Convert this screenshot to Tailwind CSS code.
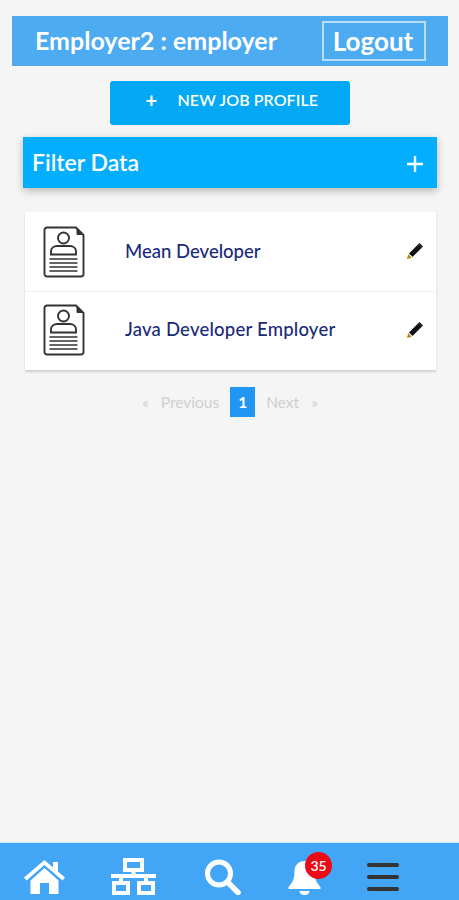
<!DOCTYPE html>
<html lang="en">
<head>
    <meta charset="UTF-8">
    <meta name="viewport" content="width=device-width, initial-scale=1.0">
    <title>Job Profiles</title>
    <script src="https://cdn.jsdelivr.net/npm/@tailwindcss/browser@4"></script>
</head>
<body class="bg-[#f5f5f5] font-['Lato','Noto_Sans',sans-serif]">
    <div class="relative h-[900px] w-[459px] overflow-hidden flex flex-col pt-4">
        <!-- header -->
        <div class="ml-3 mr-[11px] h-[50px] bg-[#4cabf1] flex items-center justify-between pl-[23px] pr-[22px] text-white">
            <span class="text-[25px] font-bold">Employer2 : employer</span>
            <span class="w-[104px] h-[40px] border-2 border-white/60 flex items-center justify-center text-[26px] font-bold pr-[2px]">Logout</span>
        </div>

        <!-- new job profile -->
        <div class="mt-[15px] mx-auto w-[240px] h-[44px] bg-[#03a9f4] rounded-[3px] flex items-start pt-[9px] pl-[36px] text-white">
            <span class="w-[32px] text-[20px] leading-[20px] font-bold">+</span>
            <span class="text-[16px] leading-[20px] font-semibold tracking-[0.07px]">NEW JOB PROFILE</span>
        </div>

        <!-- filter bar -->
        <div class="mt-3 ml-[23px] mr-[22px] h-[51px] bg-[#03aeff] shadow-[0_3px_8px_rgba(0,0,0,0.25)] flex items-center justify-between pl-[9px] pr-[13px] text-white">
            <span class="text-[23px] font-semibold">Filter Data</span>
            <svg width="18" height="18" viewBox="0 0 18 18" class="mt-[2px]"><path d="M9 1v16M1 9h16" stroke="#fff" stroke-width="2.4"/></svg>
        </div>

        <!-- list -->
        <div class="mt-6 ml-[25px] mr-[23px] bg-white shadow-[0_2px_2px_rgba(0,0,0,0.16)]">
            <div class="h-[80px] flex items-center border-b border-[#f0f0f0] pl-[18px] pr-[12px]">
                <svg width="42" height="52" viewBox="0 0 42 52" fill="none" stroke="#333" stroke-width="1.9">
                    <path d="M4 1.500h29l7.500 7.500v39a2.500 2.500 0 0 1-2.500 2.500h-34a2.500 2.500 0 0 1-2.500-2.500v-44a2.500 2.500 0 0 1 2.500-2.500z"/>
                    <path d="M34 2l6 6.500h-6z" fill="#333" stroke-width="1"/>
                    <circle cx="20.500" cy="12" r="5.500"/>
                    <path d="M8 28.500v-3c0-3.500 3-5.500 6-5.500h13c3 0 6 2 6 5.500v3z"/>
                    <path d="M6.500 33h28M6.500 37h28M6.500 41h28M6.500 45h28" stroke-width="1.700"/>
                </svg>
                <span class="ml-[40px] text-[18.5px] font-medium text-[#1a2a7a]">Mean Developer</span>
                <svg width="18" height="18" viewBox="0 0 18 18" class="ml-auto mb-[2px]"><path d="M1 17l1.200-4.800 3.600 3.600z" fill="#b8860b"/><path d="M3 11.500L12.500 2l3.500 3.500L6.500 15z" fill="#111"/><path d="M13.500 1l3.500 3.500-1 1L12.500 2z" fill="#111"/></svg>
            </div>
            <div class="h-[78px] flex items-center pb-[2px] pl-[18px] pr-[12px]">
                <svg width="42" height="52" viewBox="0 0 42 52" fill="none" stroke="#333" stroke-width="1.9">
                    <path d="M4 1.500h29l7.500 7.500v39a2.500 2.500 0 0 1-2.500 2.500h-34a2.500 2.500 0 0 1-2.500-2.500v-44a2.500 2.500 0 0 1 2.500-2.500z"/>
                    <path d="M34 2l6 6.500h-6z" fill="#333" stroke-width="1"/>
                    <circle cx="20.500" cy="12" r="5.500"/>
                    <path d="M8 28.500v-3c0-3.500 3-5.500 6-5.500h13c3 0 6 2 6 5.500v3z"/>
                    <path d="M6.500 33h28M6.500 37h28M6.500 41h28M6.500 45h28" stroke-width="1.700"/>
                </svg>
                <span class="ml-[40px] text-[18.5px] font-medium text-[#1a2a7a] tracking-[0.22px]">Java Developer Employer</span>
                <svg width="18" height="18" viewBox="0 0 18 18" class="ml-auto"><path d="M1 17l1.200-4.800 3.600 3.600z" fill="#b8860b"/><path d="M3 11.500L12.500 2l3.500 3.500L6.500 15z" fill="#111"/><path d="M13.500 1l3.500 3.500-1 1L12.500 2z" fill="#111"/></svg>
            </div>
        </div>

        <!-- pagination -->
        <div class="mt-[17px] h-[30px] flex items-center justify-center text-[15.5px] text-[#cfcfcf] pl-[1px]">
            <span class="pt-[2px]">«</span>
            <span class="ml-[12px] pt-[2px]">Previous</span>
            <span class="ml-[11px] w-[25px] h-[30px] bg-[#2196f3] text-white font-bold flex items-center justify-center pt-[2px]">1</span>
            <span class="ml-[11px] pt-[2px]">Next</span>
            <span class="ml-[12px] pt-[2px]">»</span>
        </div>

        <!-- bottom nav -->
        <div class="absolute bottom-0 left-0 right-0 h-[58px] bg-[#42a5f5] border-t border-[#cfe6fa]">
            <div class="relative h-full flex items-center justify-between pl-[24px] pr-[60px] pt-[10px]">
                <svg width="41" height="34" viewBox="0 0 41 34" fill="#fff"><path d="M20.500 0L0 17.500l2.500 3L20.500 5l18 15.500 2.500-3-7-6V2h-5v5.500z"/><path d="M6.500 20.500L20.500 8l14 12.500V34H25V23h-9v11H6.500z"/></svg>
                <svg width="45" height="37" viewBox="0 0 45 37" fill="none" stroke="#fff" stroke-width="4"><rect x="14" y="2" width="17" height="10"/><path d="M22.500 12v6M0 18h45M10 18v7M35 18v7"/><rect x="3" y="25" width="14" height="10"/><rect x="28" y="25" width="14" height="10"/></svg>
                <svg width="38" height="36" viewBox="0 0 38 36" fill="none" stroke="#fff" class="ml-[2px]"><circle cx="15" cy="14.500" r="11.500" stroke-width="5"/><path d="M24 23.500l10 10" stroke-width="5.500" stroke-linecap="round"/></svg>
                <svg width="33" height="36" viewBox="0 0 33 36" fill="#fff"><path d="M16.500 2c-6 0-10 4.500-10 10 0 9-2.500 12-6 16v2h32v-2c-3.500-4-6-7-6-16 0-5.500-4-10-10-10z"/><path d="M11.500 32h10c0 2.500-2 4-5 4s-5-1.500-5-4z"/></svg>
                <div class="w-[32px] flex flex-col gap-[8px]">
                    <div class="h-[4px] rounded-sm bg-[#333]"></div>
                    <div class="h-[4px] rounded-sm bg-[#333]"></div>
                    <div class="h-[4px] rounded-sm bg-[#333]"></div>
                </div>
                <span class="absolute left-[305px] top-[9px] w-[27px] h-[27px] rounded-full bg-[#ee0a14] text-white text-[14px] font-semibold flex items-center justify-center">35</span>
            </div>
        </div>
    </div>
</body>
</html>
